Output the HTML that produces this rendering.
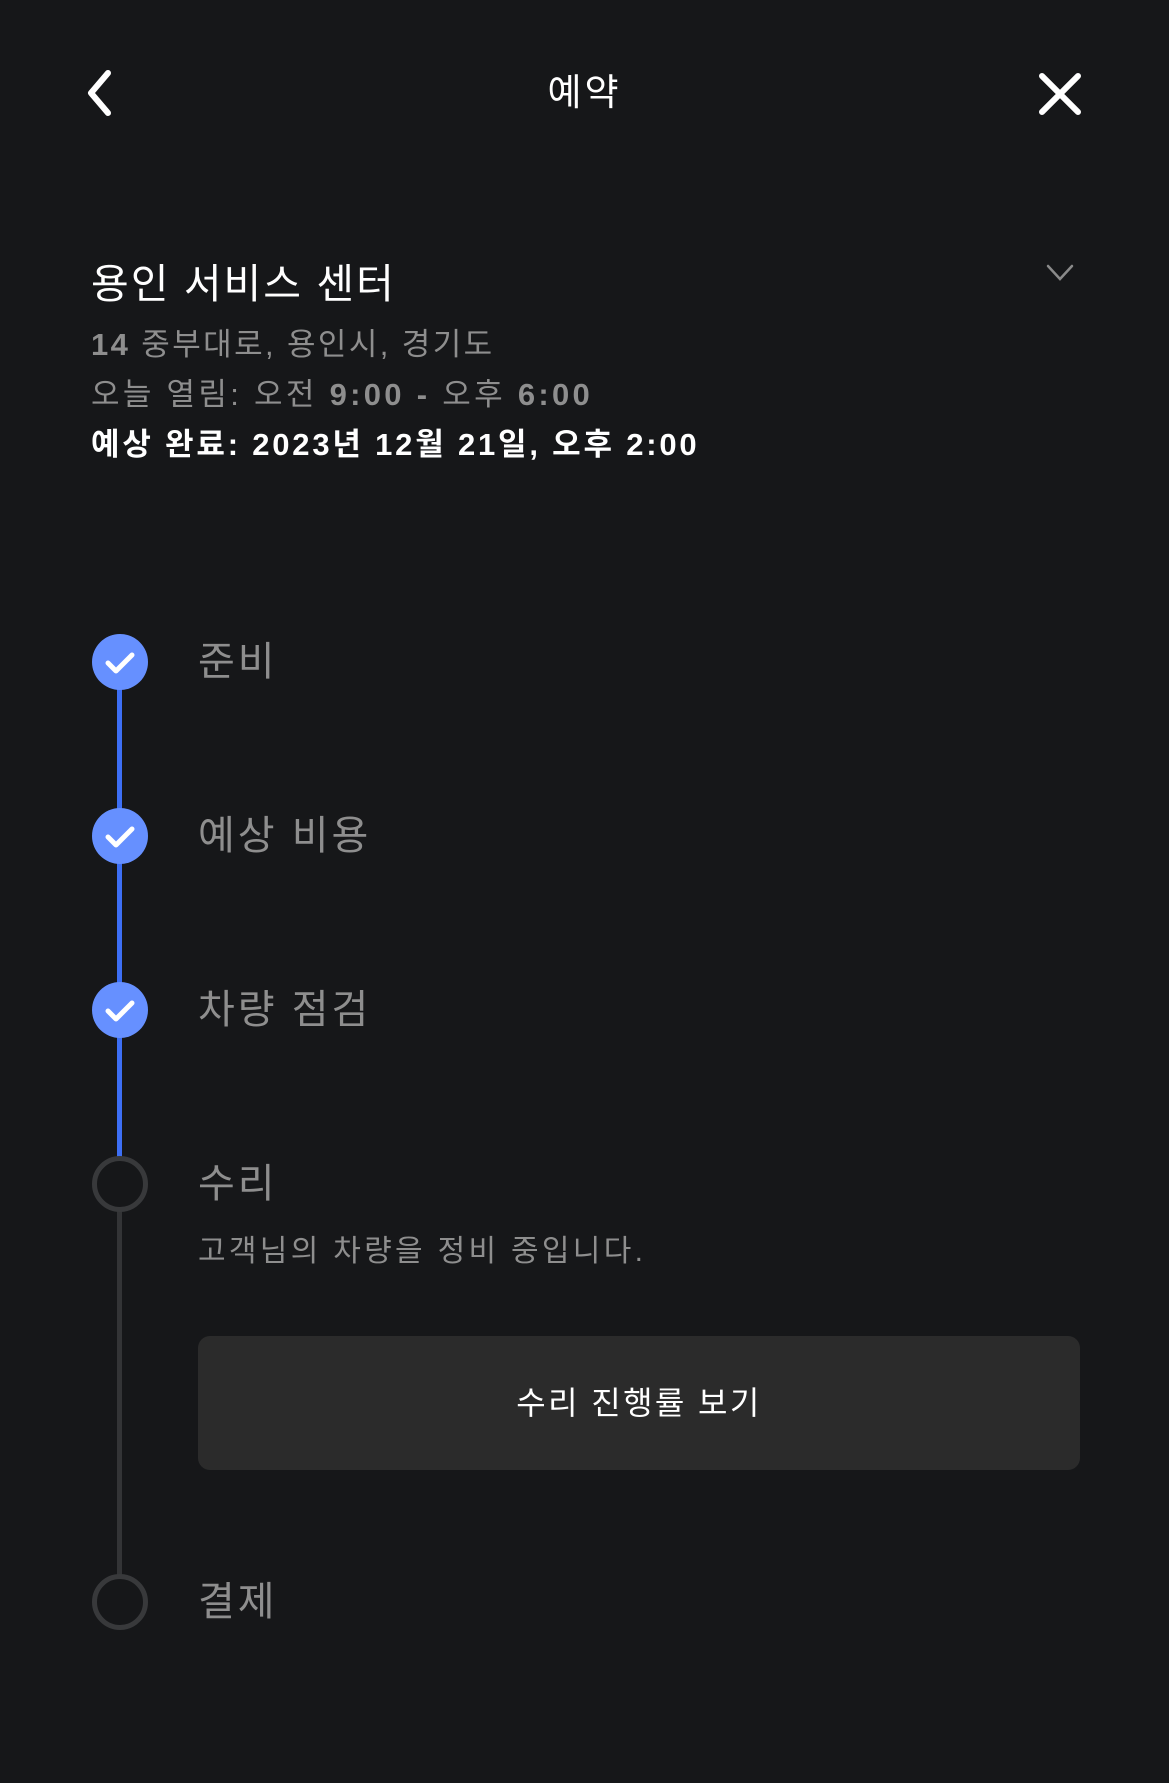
<!DOCTYPE html>
<html><head><meta charset="utf-8"><style>
body{margin:0;width:1169px;height:1783px;background:#161719;font-family:"Liberation Sans","Noto Sans CJK KR",sans-serif;position:relative;overflow:hidden}
.t{position:absolute;white-space:nowrap}
.c{position:absolute;width:56px;height:56px;border-radius:50%;left:92px;box-sizing:border-box}
.done{background:#6690ff}
.todo{border:5px solid #38393b;background:#161719}
.lbl{position:absolute;left:198px;font-size:40px;line-height:40px;color:#8e8e8e;letter-spacing:3px}
</style></head><body>
<svg style="position:absolute;left:80px;top:66px" width="40" height="54"><path d="M28 7 L11 27 L28 47" fill="none" stroke="#fff" stroke-width="6" stroke-linecap="round" stroke-linejoin="round"/></svg>
<div class="t" style="left:0;width:1169px;text-align:center;top:73px;font-size:37px;line-height:40px;color:#fff;letter-spacing:3px">예약</div>
<svg style="position:absolute;left:1036px;top:70px" width="48" height="48"><path d="M6 6 L42 42 M42 6 L6 42" stroke="#fff" stroke-width="6" stroke-linecap="round"/></svg>
<div class="t" style="left:91px;top:263px;font-size:41px;line-height:42px;color:#fff;letter-spacing:2px">용인 서비스 센터</div>
<svg style="position:absolute;left:1044px;top:262px" width="32" height="22"><path d="M4 4 L16 17 L28 4" fill="none" stroke="#8a8a8a" stroke-width="2.5" stroke-linecap="round"/></svg>
<div class="t" style="left:91px;top:329px;font-size:31px;line-height:32px;color:#8e8e8e;letter-spacing:2.4px"><b>14</b> 중부대로, 용인시, 경기도</div>
<div class="t" style="left:91px;top:379px;font-size:31px;line-height:32px;color:#8e8e8e;letter-spacing:3.3px">오늘 열림: 오전 <b>9:00 - </b>오후 <b>6:00</b></div>
<div class="t" style="left:91px;top:429px;font-size:31px;line-height:32px;color:#fff;font-weight:bold;letter-spacing:2.8px">예상 완료: 2023년 12월 21일, 오후 2:00</div>

<div style="position:absolute;left:117px;top:662px;width:5px;height:522px;background:#3d6ff5"></div>
<div style="position:absolute;left:117px;top:1184px;width:5px;height:418px;background:#333436"></div>

<div class="c done" style="top:634px"></div>
<div class="c done" style="top:808px"></div>
<div class="c done" style="top:982px"></div>
<svg style="position:absolute;left:92px;top:634px" width="56" height="56"><path d="M16 29 L24 37 L40 21" fill="none" stroke="#fff" stroke-width="5" stroke-linecap="round" stroke-linejoin="round"/></svg>
<svg style="position:absolute;left:92px;top:808px" width="56" height="56"><path d="M16 29 L24 37 L40 21" fill="none" stroke="#fff" stroke-width="5" stroke-linecap="round" stroke-linejoin="round"/></svg>
<svg style="position:absolute;left:92px;top:982px" width="56" height="56"><path d="M16 29 L24 37 L40 21" fill="none" stroke="#fff" stroke-width="5" stroke-linecap="round" stroke-linejoin="round"/></svg>
<div class="c todo" style="top:1156px"></div>
<div class="c todo" style="top:1574px"></div>

<div class="lbl" style="top:642px">준비</div>
<div class="lbl" style="top:816px">예상 비용</div>
<div class="lbl" style="top:990px">차량 점검</div>
<div class="lbl" style="top:1164px">수리</div>
<div class="t" style="left:198px;top:1236px;font-size:30px;line-height:32px;color:#8e8e8e;letter-spacing:3.3px">고객님의 차량을 정비 중입니다.</div>
<div style="position:absolute;left:198px;top:1336px;width:882px;height:134px;background:#2b2b2b;border-radius:12px;color:#fff;font-size:32px;line-height:134px;text-align:center;letter-spacing:2.4px">수리 진행률 보기</div>
<div class="lbl" style="top:1582px">결제</div>
</body></html>
